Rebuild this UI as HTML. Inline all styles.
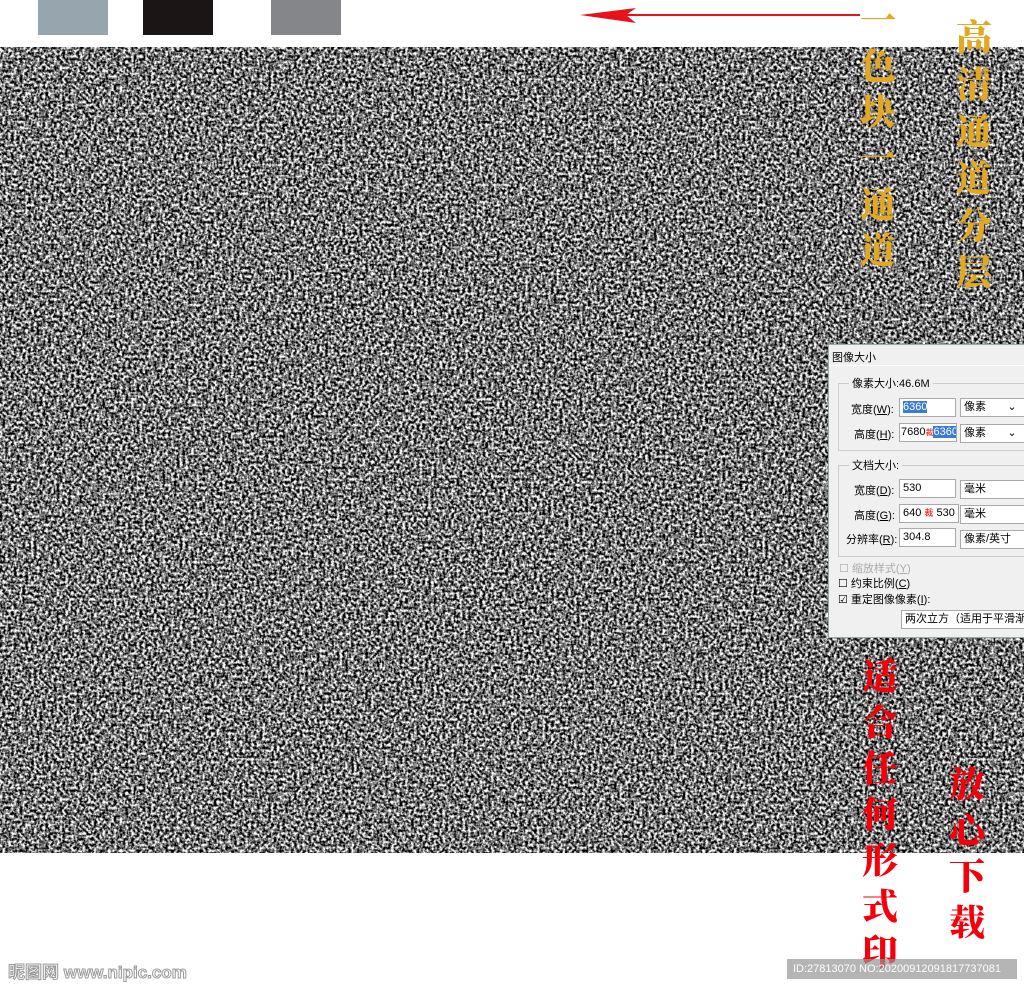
<!DOCTYPE html>
<html><head><meta charset="utf-8"><style>
body{margin:0;width:1024px;height:989px;position:relative;background:#fff;overflow:hidden;font-family:"Liberation Sans","Noto Sans CJK SC",sans-serif}
.a{position:absolute}
.v{position:absolute;font-family:"Noto Serif CJK SC","Noto Sans CJK SC",serif;font-weight:900;text-align:center}
.v span{display:block}
.dlg{position:absolute;left:828px;top:344px;width:200px;height:292px;background:#f0f0f0;border:1px solid #9aa;font-size:11px;color:#000;overflow:hidden}
.dlg *{white-space:nowrap}
.box{position:absolute;background:#fff;border:1px solid #aaa;height:17px;line-height:17px;padding-left:3px;font-size:11px;overflow:hidden}
.grp{position:absolute;border:1px solid #ccc}
.lbl{position:absolute;font-size:11px}
</style></head><body>
<div class="a" style="left:38px;top:0;width:70px;height:35px;background:#97a6ae"></div>
<div class="a" style="left:143px;top:0;width:70px;height:35px;background:#1b1516"></div>
<div class="a" style="left:271px;top:0;width:70px;height:35px;background:#858689"></div>
<svg class="a" style="left:570px;top:5px" width="300" height="20"><line x1="50" y1="10" x2="290" y2="10" stroke="#e8121b" stroke-width="2"/><path d="M10 10 L66 3 L56 10 L66 18 Z" fill="#e8121b"/></svg>
<svg class="a" style="left:0;top:47px" width="1024" height="806">
<filter id="n" x="0" y="0" width="100%" height="100%" color-interpolation-filters="sRGB"><feTurbulence type="fractalNoise" baseFrequency="0.35" numOctaves="3" seed="3"/>
<feColorMatrix type="matrix" values="1 0 0 0 0 1 0 0 0 0 1 0 0 0 0 0 0 0 0 1"/>
<feComponentTransfer><feFuncR type="linear" slope="2.6" intercept="-0.84"/><feFuncG type="linear" slope="2.6" intercept="-0.84"/><feFuncB type="linear" slope="2.6" intercept="-0.84"/></feComponentTransfer></filter>
<rect width="1024" height="806" fill="#666"/>
<rect width="1024" height="806" filter="url(#n)"/>
</svg>
<div class="v" style="left:857px;top:-4px;width:42px;font-size:36px;line-height:46px;color:#e2a822"><span>一</span><span>色</span><span>块</span><span>一</span><span>通</span><span>道</span></div>
<div class="v" style="left:953px;top:12px;width:42px;font-size:36px;line-height:47px;color:#e2a822"><span>高</span><span>清</span><span>通</span><span>道</span><span>分</span><span>层</span></div>
<div class="dlg">
<div class="lbl" style="left:3px;top:4px">图像大小</div>
<div class="a" style="left:0;top:20px;width:200px;height:272px;background:#f0f0f0;border-top:1px solid #fff"></div>
<div class="grp" style="left:9px;top:38px;width:200px;height:66px"></div>
<div class="lbl" style="left:20px;top:30px;background:#f0f0f0;padding:0 3px">像素大小:46.6M</div>
<div class="lbl" style="left:22px;top:56px">宽度(<u>W</u>):</div>
<div class="box" style="left:70px;top:53px;width:52px"><span style="background:#3a7bd5;color:#fff">6360</span></div>
<div class="box" style="left:131px;top:53px;width:70px">像素 &nbsp; &nbsp; &nbsp; ⌄</div>
<div class="lbl" style="left:25px;top:81px">高度(<u>H</u>):</div>
<div class="box" style="left:70px;top:78px;width:55px;padding-left:1px">7680<span style="color:#e00;font-size:8px">裁</span><span style="background:#3a7bd5;color:#fff">6360</span></div>
<div class="box" style="left:131px;top:79px;width:70px">像素 &nbsp; &nbsp; &nbsp; ⌄</div>
<div class="grp" style="left:9px;top:120px;width:200px;height:90px"></div>
<div class="lbl" style="left:20px;top:112px;background:#f0f0f0;padding:0 3px">文档大小:</div>
<div class="lbl" style="left:25px;top:137px">宽度(<u>D</u>):</div>
<div class="box" style="left:70px;top:134px;width:52px">530</div>
<div class="box" style="left:131px;top:135px;width:70px">毫米</div>
<div class="lbl" style="left:25px;top:162px">高度(<u>G</u>):</div>
<div class="box" style="left:70px;top:159px;width:55px">640 <span style="color:#e00;font-size:9px">裁</span> 530</div>
<div class="box" style="left:131px;top:160px;width:70px">毫米</div>
<div class="lbl" style="left:17px;top:186px">分辨率(<u>R</u>):</div>
<div class="box" style="left:70px;top:183px;width:52px">304.8</div>
<div class="box" style="left:131px;top:185px;width:70px">像素/英寸</div>
<div class="lbl" style="left:10px;top:215px;color:#aaa">☐ 缩放样式(<u>Y</u>)</div>
<div class="lbl" style="left:9px;top:230px">☐ 约束比例(<u>C</u>)</div>
<div class="lbl" style="left:9px;top:246px">☑ 重定图像像素(<u>I</u>):</div>
<div class="box" style="left:72px;top:265px;width:130px;height:17px">两次立方（适用于平滑渐变</div>
</div>
<div class="v" style="left:859px;top:652px;width:42px;font-size:36px;line-height:46px;color:#f5000a"><span>适</span><span>合</span><span>任</span><span>何</span><span>形</span><span>式</span><span>印</span></div>
<div class="v" style="left:946px;top:760px;width:42px;font-size:36px;line-height:46px;color:#f5000a"><span>放</span><span>心</span><span>下</span><span>载</span></div>
<div class="a" style="left:8px;top:958px;font-size:17px;font-weight:bold;color:#fff;-webkit-text-stroke:1px #999;white-space:nowrap">昵图网 www.nipic.com</div>
<div class="a" style="left:787px;top:959px;width:230px;height:20px;background:rgba(150,150,150,0.7);color:#fff;font-size:11px;line-height:20px;padding-left:6px;box-sizing:border-box;white-space:nowrap;overflow:hidden">ID:27813070 NO:20200912091817737081</div>
</body></html>
